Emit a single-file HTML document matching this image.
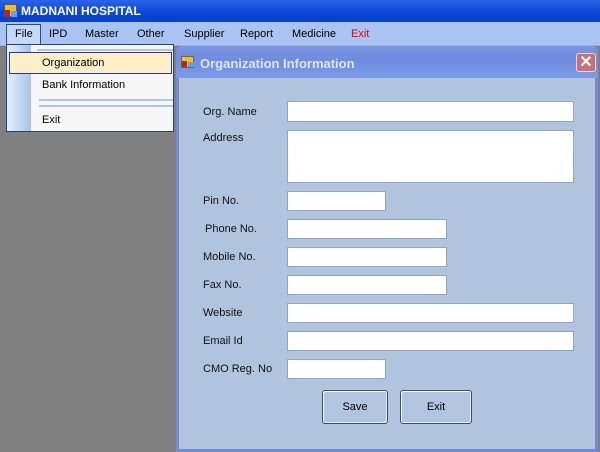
<!DOCTYPE html>
<html><head><style>
*{margin:0;padding:0;box-sizing:border-box}
body{width:600px;height:450px;overflow:hidden;background:#808080;font-family:"Liberation Sans",sans-serif;font-size:11px;position:relative}
.abs{position:absolute}
#title{left:0;top:0;width:600px;height:22px;background:linear-gradient(#2a63e8,#0a46d6 60%,#0840c8);color:#fff;font-weight:bold;font-size:12px}
#menu{left:0;top:22px;width:600px;height:24px;background:#a9c4f2;border-bottom:1px solid #98b0dc}
.mi{position:absolute;top:6px;font-size:11px;color:#000}
#dlg{left:176px;top:46px;width:422px;height:406px;background:#b0c4de;border:3px solid #7587d9;border-top:none;border-radius:6px 6px 0 0}
#dtitle{left:-3px;top:0;width:422px;height:32px;background:linear-gradient(#7d96e2,#6f8ce0 40%,#7b9be8);color:#dbe6fa;font-weight:bold;font-size:13px;border-radius:6px 6px 0 0}
.lbl{position:absolute;left:24px;font-size:11px;color:#111}
.in{position:absolute;left:108px;background:#fff;border:1px solid #8ea5c8}
.btn{position:absolute;top:344px;height:34px;border:1px solid #2f4f7f;border-radius:3px;background:#b3c5de;box-shadow:inset 1px 1px 0 #fff,inset -1px -1px 0 #e8eef8;text-align:center;line-height:32px;font-size:11px}
#dd{left:6px;top:44px;width:168px;height:88px;background:#f7f7f7;border:1px solid #24408a}
</style></head><body>
<div id="title" class="abs">
 <div class="abs" style="left:4px;top:4px;width:13px;height:13px;background:#f0c020;border:1px solid #555"><div class="abs" style="left:0;top:5px;width:5px;height:7px;background:#c02020"></div><div class="abs" style="left:6px;top:6px;width:6px;height:6px;background:#6aa0e0"></div></div>
 <div class="abs" style="left:21px;top:4px">MADNANI HOSPITAL</div>
</div>
<div id="menu" class="abs">
 <div class="abs" style="left:6px;top:2px;width:35px;height:22px;background:#c6d8f5;border:1px solid #2a4a8a;border-bottom:none"></div>
 <span class="mi" style="left:15px">File</span>
 <span class="mi" style="left:49px">IPD</span>
 <span class="mi" style="left:85px">Master</span>
 <span class="mi" style="left:137px">Other</span>
 <span class="mi" style="left:184px">Supplier</span>
 <span class="mi" style="left:240px">Report</span>
 <span class="mi" style="left:292px">Medicine</span>
 <span class="mi" style="left:351px;color:#e00">Exit</span>
</div>
<div id="dlg" class="abs">
 <div id="dtitle" class="abs">
  <div class="abs" style="left:5px;top:10px;width:13px;height:12px;background:#f0c020;border:1px solid #666"><div class="abs" style="left:0;top:4px;width:5px;height:6px;background:#c02020"></div><div class="abs" style="left:6px;top:5px;width:6px;height:5px;background:#6aa0e0"></div></div>
  <div class="abs" style="left:24px;top:10px">Organization Information</div>
  <div class="abs" style="left:400px;top:7px;width:20px;height:19px;background:#c8707a;border:1px solid #f0d0d0;border-radius:3px;color:#fff;font-size:16px;text-align:center;line-height:17px">✕</div>
 </div>
 <div class="lbl" style="top:60px">Org. Name</div><div class="in" style="top:55px;width:287px;height:21px"></div>
 <div class="lbl" style="top:86px">Address</div><div class="in" style="top:84px;width:287px;height:53px"></div>
 <div class="lbl" style="top:149px">Pin No.</div><div class="in" style="top:145px;width:99px;height:20px"></div>
 <div class="lbl" style="top:177px;left:26px">Phone No.</div><div class="in" style="top:173px;width:160px;height:20px"></div>
 <div class="lbl" style="top:205px">Mobile No.</div><div class="in" style="top:201px;width:160px;height:20px"></div>
 <div class="lbl" style="top:233px">Fax No.</div><div class="in" style="top:229px;width:160px;height:20px"></div>
 <div class="lbl" style="top:261px">Website</div><div class="in" style="top:257px;width:287px;height:20px"></div>
 <div class="lbl" style="top:289px">Email Id</div><div class="in" style="top:285px;width:287px;height:20px"></div>
 <div class="lbl" style="top:317px">CMO Reg. No</div><div class="in" style="top:313px;width:99px;height:20px"></div>
 <div class="btn" style="left:143px;width:66px">Save</div>
 <div class="btn" style="left:221px;width:72px">Exit</div>
</div>
<div id="dd" class="abs">
 <div class="abs" style="left:0;top:0;width:24px;height:86px;background:linear-gradient(90deg,#e6eefb,#a8c2ec)"></div>
 <div class="abs" style="left:30px;top:4px;width:136px;height:2px;background:#b0c4e4"></div>
 <div class="abs" style="left:2px;top:7px;width:163px;height:22px;background:#fdeec8;border:1px solid #223c88"></div>
 <div class="abs" style="left:35px;top:12px">Organization</div>
 <div class="abs" style="left:35px;top:34px">Bank Information</div>
 <div class="abs" style="left:32px;top:54px;width:134px;height:2px;background:#b0c4e4"></div>
 <div class="abs" style="left:32px;top:60px;width:134px;height:2px;background:#b0c4e4"></div>
 <div class="abs" style="left:35px;top:69px">Exit</div>
</div>
</body></html>
